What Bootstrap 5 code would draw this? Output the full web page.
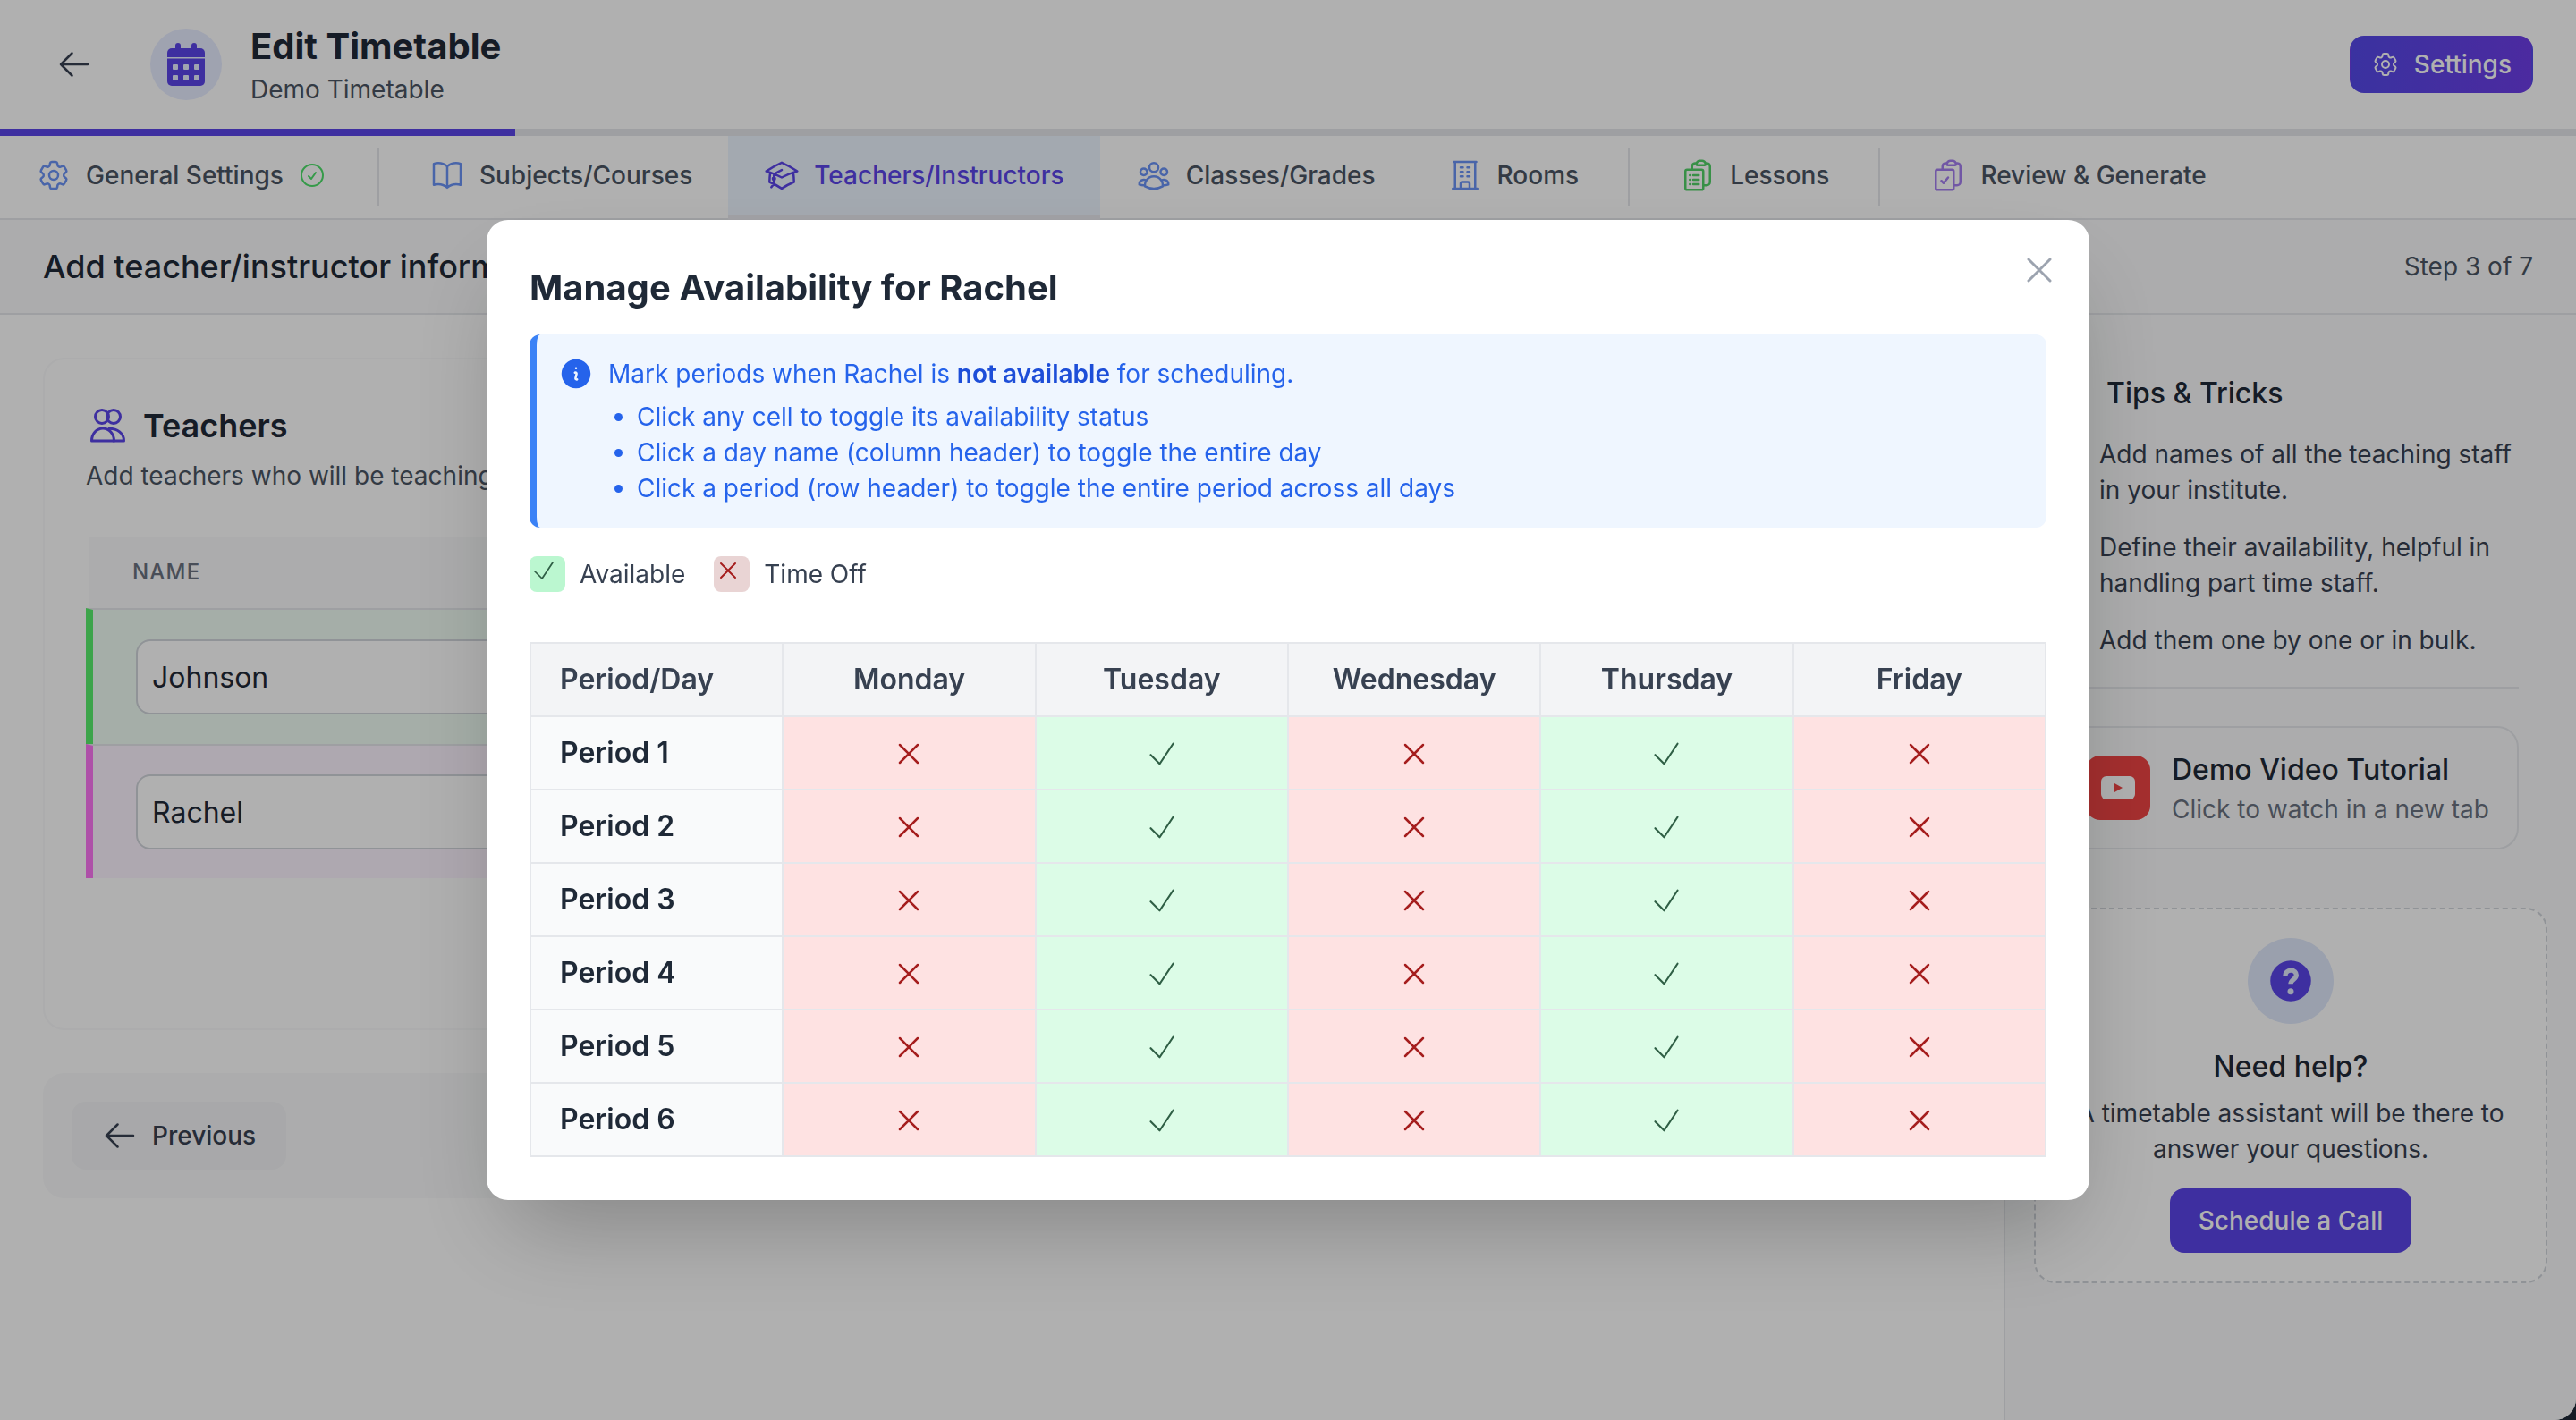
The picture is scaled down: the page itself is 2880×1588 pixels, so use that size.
<!DOCTYPE html>
<html lang="en">
<head>
<meta charset="utf-8">
<title>Edit Timetable</title>
<link rel="stylesheet" href="https://cdn.jsdelivr.net/npm/bootstrap@5.3.0/dist/css/bootstrap.min.css">
<style>
:root{--bs-border-width:2px;--brand:#5b45e8;}
html{font-size:32px;background:#1f2937;}
body{font-family:Inter,"Liberation Sans",sans-serif;font-size:28px;line-height:40px;color:#374151;background:#1f2937;}
.app-page{background:#fff;border-bottom-right-radius:24px;overflow:hidden;}
.ico{fill:none;stroke:currentColor;stroke-width:1.5;stroke-linecap:round;stroke-linejoin:round;flex:none;display:block;}
.ico-40{width:40px;height:40px;}
.ico-32{width:32px;height:32px;}
.top-bar{height:144px;padding:0 48px 0 63px;background:#fff;}
.back-link{color:#374151;margin-right:65px;}
.cal-disc{width:80px;height:80px;background:#e6ecff;color:var(--brand);margin-right:32px;}
.cal-disc svg{width:42px;height:48px;display:block;}
.cal-hole{fill:#e6ecff;}
.page-title{font-size:40px;line-height:56px;font-weight:700;color:#1f2937;margin:0;}
.page-sub{font-size:28px;line-height:40px;color:#4b5563;}
.btn-settings{--bs-btn-bg:#5b45e8;--bs-btn-border-color:transparent;--bs-btn-color:#fff;--bs-btn-border-radius:16px;--bs-btn-padding-x:22px;--bs-btn-padding-y:10px;--bs-btn-font-size:28px;--bs-btn-line-height:40px;--bs-btn-font-weight:500;background-image:linear-gradient(90deg,#5549e8,#6e3ee8);height:64px;}
.step-track{--bs-progress-height:8px;--bs-progress-bg:#e5e7eb;--bs-progress-bar-bg:var(--brand);--bs-progress-border-radius:0;}
.step-tabs{height:94px;background:#fff;border-bottom:2px solid #e5e7eb;flex-wrap:nowrap;}
.step-tabs .nav-link{--bs-nav-link-color:#4b5563;--bs-nav-link-hover-color:#4b5563;--bs-nav-link-padding-x:40px;--bs-nav-link-padding-y:0;--bs-nav-link-font-size:28px;--bs-nav-link-font-weight:500;height:88px;display:flex;align-items:center;gap:16px;}
.step-tabs .nav-link.active{color:var(--brand);background:#edf5ff;border-bottom:6px solid #e9e9ef;height:94px;}
.tab-rule{width:2px;height:64px;background:#e5e7eb;margin:14px 16px 0 17px;flex:none;}
.tab-rule.tight{margin-left:15px;}
.tone-blue{color:#6b93f5;}
.tone-brand{color:var(--brand);}
.tone-green{color:#52d168;}
.tone-purple{color:#a47ef0;}
.tone-ok{color:#4ee06a;}
.sub-head{height:106px;padding:0 48px;background:#f9fafb;border-bottom:2px solid #e5e7eb;}
.sub-title{font-size:36px;line-height:56px;font-weight:500;color:#1f2937;}
.sub-step{font-size:28px;color:#4b5563;}
.work-area{flex:1 1 auto;min-height:0;}
.work-main{flex:1 1 auto;min-width:0;padding:48px 48px 0;background:#fff;}
.staff-card{height:752px;border:2px solid #f9fafb;border-radius:24px;padding:46px;background:#fff;}
.staff-title{font-size:36px;line-height:56px;font-weight:600;color:#1f2937;margin:0;}
.staff-icon{width:48px;height:48px;color:var(--brand);stroke-width:3;}
.staff-sub{color:#4b5563;margin-top:8px;margin-bottom:48px;}
.staff-head{margin-left:4px;height:80px;padding-left:48px;background:#f9fafb;font-size:24px;font-weight:500;letter-spacing:1.2px;color:#6b7280;display:flex;align-items:center;}
.staff-row{border-left:8px solid;border-top:2px solid #e5e7eb;padding:32px 0 32px 48px;}
.staff-row.first{padding-top:33px;padding-bottom:33px;}
.row-green{border-left-color:#58ee6c;background:#f0fdf4;}
.row-pink{border-left-color:#fc74f4;background:#fdf4ff;}
.staff-input{width:1500px;height:84px;font-size:32px;line-height:48px;color:#1f2937;border:2px solid #d1d5db;border-radius:16px;padding:0 16px;}
.pager{margin-top:48px;height:140px;background:#f9fafb;border-radius:24px;padding:32px;}
.btn-prev{--bs-btn-bg:#f3f4f6;--bs-btn-border-color:#f3f4f6;--bs-btn-color:#374151;--bs-btn-border-radius:16px;--bs-btn-padding-x:32px;--bs-btn-padding-y:0;--bs-btn-font-size:28px;--bs-btn-line-height:40px;--bs-btn-font-weight:500;height:76px;}
.side-col{flex:0 0 640px;width:640px;background:#f9fafb;border-left:2px solid #e5e7eb;padding:32px;}
.tips-wrap{padding:32px 32px 0;}
.tips-title{font-size:32px;line-height:48px;font-weight:500;color:#1f2937;margin:0 0 24px 49px;}
.tips-text{margin:0 0 24px 41px;color:#374151;}
.tips-rule{border-top:2px solid #e5e7eb;margin:32px 0 42px;opacity:1;}
.video-card{border:2px solid #e5e7eb;border-radius:24px;padding:23px 24px;background:#fff0;gap:24px;}
.video-icon{width:72px;height:72px;background:#ef4444;border-radius:16px;flex:none;}
.video-icon svg{width:38px;height:26px;display:block;}
.video-name{font-size:32px;line-height:48px;font-weight:500;color:#1f2937;}
.video-hint{color:#6b7280;}
.help-box{margin-top:65px;border:2px dashed #d1d5db;border-radius:24px;background:#fff;padding:32px;text-align:center;}
.help-disc{width:96px;height:96px;background:#dfe8fb;color:var(--brand);margin:0 auto 24px;}
.help-disc svg{width:56px;height:56px;display:block;}
.help-title{font-size:32px;line-height:48px;font-weight:500;color:#1f2937;margin:0 0 8px;}
.help-text{margin:0 0 24px;color:#374151;white-space:nowrap;}
.btn-call{--bs-btn-bg:var(--brand);--bs-btn-border-color:var(--brand);--bs-btn-color:#fff;--bs-btn-border-radius:16px;--bs-btn-padding-x:30px;--bs-btn-padding-y:14px;--bs-btn-font-size:28px;--bs-btn-line-height:40px;--bs-btn-font-weight:500;}
.modal-backdrop{--bs-backdrop-opacity:.31;--bs-backdrop-bg:#000;}
.modal{--bs-modal-width:1792px;--bs-modal-border-width:0;--bs-modal-border-radius:24px;--bs-modal-padding:48px;}
.modal-content{box-shadow:0 50px 100px -24px rgba(0,0,0,.25);}
.dismiss-x{top:32px;right:32px;width:48px;height:48px;color:#9ca3af;border:0;--bs-btn-padding-x:0;--bs-btn-padding-y:0;}
.dismiss-x svg{width:48px;height:48px;}
.avail-title{font-size:40px;line-height:56px;font-weight:700;color:#1f2937;margin:0 0 24px;}
.info-note{--bs-alert-bg:#eff6ff;--bs-alert-color:#2563eb;--bs-alert-border-color:transparent;--bs-alert-padding-x:24px;--bs-alert-padding-y:24px;--bs-alert-margin-bottom:32px;--bs-alert-border-radius:12px;border:0;border-left:8px solid #3b82f6;}
.info-note svg{width:40px;height:40px;color:#2563eb;flex:none;}
.info-note ul{padding-left:32px;margin:8px 0 0;}
.info-note strong{font-weight:600;color:#1d4ed8;}
.key-row{margin-bottom:56px;gap:32px;height:40px;color:#374151;}
.key-chip{width:40px;height:40px;border-radius:8px;display:block;}
.key-chip svg{width:32px;height:32px;display:block;stroke-width:1.5;}
.chip-on{background:#bbf7d0;color:#2f5f45;}
.chip-on svg{stroke-width:1.3;}
.chip-off{background:#e9d4d4;color:#a51d1d;}
.avail-grid{--bs-table-border-color:#e5e7eb;--bs-table-bg:transparent;table-layout:fixed;border-color:#e5e7eb;}
.avail-grid>*>tr>*{height:82px;padding:0;vertical-align:middle;text-align:center;font-size:32px;line-height:48px;font-weight:600;}
.avail-grid>thead>tr>*{--bs-table-bg:#f3f4f6;color:#374151;}
.avail-grid>tbody>tr>th{--bs-table-bg:#f9fafb;color:#1f2937;}
.avail-grid>*>tr>.lead-col{text-align:left;padding-left:32px;}
.avail-grid>tbody>tr>.is-off{--bs-table-bg:#fee2e2;color:#a51d1d;}
.avail-grid>tbody>tr>.is-on{--bs-table-bg:#dcfce7;color:#2f5f45;}
.avail-grid>tbody>tr>.is-on svg{stroke-width:1.3;}
.avail-grid svg{width:40px;height:40px;margin:2px auto 0;}
</style>
</head>
<body class="overflow-hidden">
<div class="app-page d-flex flex-column vh-100">
  <header class="top-bar d-flex align-items-center justify-content-between">
    <div class="d-flex align-items-center">
      <a class="back-link" href="#" aria-label="Back"><svg class="ico ico-40" viewBox="0 0 24 24"><path d="M10.5 19.5L3 12m0 0l7.5-7.5M3 12h18"/></svg></a>
      <div class="cal-disc rounded-circle d-flex align-items-center justify-content-center">
        <svg viewBox="0 0 42 48" fill="currentColor"><rect x="9" width="6" height="12" rx="3"/><rect x="27" width="6" height="12" rx="3"/><path d="M5 6h32a5 5 0 0 1 5 5v5H0v-5a5 5 0 0 1 5-5z"/><path d="M0 17.500h42V43a5 5 0 0 1-5 5H5a5 5 0 0 1-5-5z"/><g class="cal-hole"><rect x="6" y="24" width="6" height="6" rx="1"/><rect x="18" y="24" width="6" height="6" rx="1"/><rect x="30" y="24" width="6" height="6" rx="1"/><rect x="6" y="36" width="6" height="6" rx="1"/><rect x="18" y="36" width="6" height="6" rx="1"/><rect x="30" y="36" width="6" height="6" rx="1"/></g></svg>
      </div>
      <div>
        <h1 class="page-title">Edit Timetable</h1>
        <div class="page-sub">Demo Timetable</div>
      </div>
    </div>
    <button class="btn btn-settings d-flex align-items-center gap-2" type="button">
      <svg class="ico ico-32" viewBox="0 0 24 24"><path d="M9.594 3.94c.09-.542.56-.94 1.11-.94h2.593c.55 0 1.02.398 1.11.94l.213 1.281c.063.374.313.686.645.87.074.04.147.083.22.127.324.196.72.257 1.075.124l1.217-.456a1.125 1.125 0 011.37.49l1.296 2.247a1.125 1.125 0 01-.26 1.431l-1.003.827c-.293.24-.438.613-.431.992a6.759 6.759 0 010 .255c-.007.378.138.75.43.99l1.005.828c.424.35.534.954.26 1.43l-1.298 2.247a1.125 1.125 0 01-1.369.491l-1.217-.456c-.355-.133-.75-.072-1.076.124a6.57 6.57 0 01-.22.128c-.331.183-.581.495-.644.869l-.213 1.28c-.09.543-.56.941-1.11.941h-2.594c-.55 0-1.02-.398-1.11-.94l-.213-1.281c-.062-.374-.312-.686-.644-.87a6.52 6.52 0 01-.22-.127c-.325-.196-.72-.257-1.076-.124l-1.217.456a1.125 1.125 0 01-1.369-.49l-1.297-2.247a1.125 1.125 0 01.26-1.431l1.004-.827c.292-.24.437-.613.43-.992a6.932 6.932 0 010-.255c.007-.378-.138-.75-.43-.99l-1.004-.828a1.125 1.125 0 01-.26-1.43l1.297-2.247a1.125 1.125 0 011.37-.491l1.216.456c.356.133.751.072 1.076-.124.072-.044.146-.087.22-.128.332-.183.582-.495.644-.869l.214-1.281z"/><path d="M15 12a3 3 0 11-6 0 3 3 0 016 0z"/></svg>
      Settings
    </button>
  </header>
  <div class="progress step-track flex-none"><div class="progress-bar" style="width:20%"></div></div>
  <nav class="nav step-tabs">
    <a class="nav-link" href="#"><svg class="ico ico-40 tone-blue" viewBox="0 0 24 24"><path d="M9.594 3.94c.09-.542.56-.94 1.11-.94h2.593c.55 0 1.02.398 1.11.94l.213 1.281c.063.374.313.686.645.87.074.04.147.083.22.127.324.196.72.257 1.075.124l1.217-.456a1.125 1.125 0 011.37.49l1.296 2.247a1.125 1.125 0 01-.26 1.431l-1.003.827c-.293.24-.438.613-.431.992a6.759 6.759 0 010 .255c-.007.378.138.75.43.99l1.005.828c.424.35.534.954.26 1.43l-1.298 2.247a1.125 1.125 0 01-1.369.491l-1.217-.456c-.355-.133-.75-.072-1.076.124a6.57 6.57 0 01-.22.128c-.331.183-.581.495-.644.869l-.213 1.28c-.09.543-.56.941-1.11.941h-2.594c-.55 0-1.02-.398-1.11-.94l-.213-1.281c-.062-.374-.312-.686-.644-.87a6.52 6.52 0 01-.22-.127c-.325-.196-.72-.257-1.076-.124l-1.217.456a1.125 1.125 0 01-1.369-.49l-1.297-2.247a1.125 1.125 0 01.26-1.431l1.004-.827c.292-.24.437-.613.43-.992a6.932 6.932 0 010-.255c.007-.378-.138-.75-.43-.99l-1.004-.828a1.125 1.125 0 01-.26-1.43l1.297-2.247a1.125 1.125 0 011.37-.491l1.216.456c.356.133.751.072 1.076-.124.072-.044.146-.087.22-.128.332-.183.582-.495.644-.869l.214-1.281z"/><path d="M15 12a3 3 0 11-6 0 3 3 0 016 0z"/></svg>General Settings<svg class="ico ico-32 tone-ok" viewBox="0 0 24 24"><path d="M9 12.75L11.25 15 15 9.75M21 12a9 9 0 11-18 0 9 9 0 0118 0z"/></svg></a>
    <span class="tab-rule"></span>
    <a class="nav-link" href="#"><svg class="ico ico-40 tone-blue" viewBox="0 0 24 24"><path d="M12 6.042A8.967 8.967 0 006 3.75c-1.052 0-2.062.18-3 .512v14.25A8.987 8.987 0 016 18c2.305 0 4.408.867 6 2.292m0-14.25a8.966 8.966 0 016-2.292c1.052 0 2.062.18 3 .512v14.25A8.987 8.987 0 0018 18a8.967 8.967 0 00-6 2.292m0-14.25v14.25"/></svg>Subjects/Courses</a>
    <a class="nav-link active" href="#"><svg class="ico ico-40 tone-brand" viewBox="0 0 24 24"><path d="M4.26 10.147a60.436 60.436 0 00-.491 6.347A48.627 48.627 0 0112 20.904a48.627 48.627 0 018.232-4.41 60.46 60.46 0 00-.491-6.347m-15.482 0a50.57 50.57 0 00-2.658-.813A59.905 59.905 0 0112 3.493a59.902 59.902 0 0110.399 5.84c-.896.248-1.783.52-2.658.814m-15.482 0A50.697 50.697 0 0112 13.489a50.702 50.702 0 017.74-3.342M6.75 15a.75.75 0 100-1.5.75.75 0 000 1.5zm0 0v-3.675A55.378 55.378 0 0112 8.443m-7.007 11.55A5.981 5.981 0 006.75 15.75v-1.5"/></svg>Teachers/Instructors</a>
    <a class="nav-link" href="#"><svg class="ico ico-40 tone-blue" viewBox="0 0 24 24"><path d="M18 18.72a9.094 9.094 0 003.741-.479 3 3 0 00-4.682-2.72m.94 3.198l.001.031c0 .225-.012.447-.037.666A11.944 11.944 0 0112 21c-2.17 0-4.207-.576-5.963-1.584A6.062 6.062 0 016 18.719m12 0a5.971 5.971 0 00-.941-3.197m0 0A5.995 5.995 0 0012 12.75a5.995 5.995 0 00-5.058 2.772m0 0a3 3 0 00-4.681 2.72 8.986 8.986 0 003.74.477m.94-3.197a5.971 5.971 0 00-.94 3.197M15 6.75a3 3 0 11-6 0 3 3 0 016 0zm6 3a2.25 2.25 0 11-4.5 0 2.25 2.25 0 014.5 0zm-13.5 0a2.25 2.25 0 11-4.5 0 2.25 2.25 0 014.5 0z"/></svg>Classes/Grades</a>
    <a class="nav-link" href="#"><svg class="ico ico-40 tone-blue" viewBox="0 0 24 24"><path d="M3.75 21h16.5M4.5 3h15M5.25 3v18m13.5-18v18M9 6.75h1.5m-1.5 3h1.5m-1.5 3h1.5m3-6H15m-1.5 3H15m-1.5 3H15M9 21v-3.375c0-.621.504-1.125 1.125-1.125h3.75c.621 0 1.125.504 1.125 1.125V21"/></svg>Rooms</a>
    <span class="tab-rule tight"></span>
    <a class="nav-link" href="#"><svg class="ico ico-40 tone-green" viewBox="0 0 24 24"><path d="M9 12h3.75M9 15h3.75M9 18h3.75m3 .75H18a2.25 2.25 0 002.25-2.25V6.108c0-1.135-.845-2.098-1.976-2.192a48.424 48.424 0 00-1.123-.08m-5.801 0c-.065.21-.1.433-.1.664 0 .414.336.75.75.75h4.5a.75.75 0 00.75-.75 2.25 2.25 0 00-.1-.664m-5.8 0A2.251 2.251 0 0113.5 2.25H15c1.012 0 1.867.668 2.15 1.586m-5.8 0c-.376.023-.75.05-1.124.08C9.095 4.01 8.25 4.973 8.25 6.108V8.25m0 0H4.875c-.621 0-1.125.504-1.125 1.125v11.25c0 .621.504 1.125 1.125 1.125h9.75c.621 0 1.125-.504 1.125-1.125V9.375c0-.621-.504-1.125-1.125-1.125H8.25zM6.75 12h.008v.008H6.75V12zm0 3h.008v.008H6.75V15zm0 3h.008v.008H6.75V18z"/></svg>Lessons</a>
    <span class="tab-rule tight"></span>
    <a class="nav-link" href="#"><svg class="ico ico-40 tone-purple" viewBox="0 0 24 24"><path d="M11.35 3.836c-.065.21-.1.433-.1.664 0 .414.336.75.75.75h4.5a.75.75 0 00.75-.75 2.25 2.25 0 00-.1-.664m-5.8 0A2.251 2.251 0 0113.5 2.25H15c1.012 0 1.867.668 2.15 1.586m-5.8 0c-.376.023-.75.05-1.124.08C9.095 4.01 8.25 4.973 8.25 6.108V8.25m8.9-4.414c.376.023.75.05 1.124.08 1.131.094 1.976 1.057 1.976 2.192V16.5A2.25 2.25 0 0118 18.75h-2.25m-7.5-10.5H4.875c-.621 0-1.125.504-1.125 1.125v11.25c0 .621.504 1.125 1.125 1.125h9.75c.621 0 1.125-.504 1.125-1.125V18.75m-7.5-10.5h6.375c.621 0 1.125.504 1.125 1.125v9.375m-8.25-3l1.5 1.5 3-3.750"/></svg>Review &amp; Generate</a>
  </nav>
  <div class="sub-head d-flex align-items-center justify-content-between">
    <div class="sub-title">Add teacher/instructor information</div>
    <div class="sub-step">Step 3 of 7</div>
  </div>
  <div class="work-area d-flex">
    <main class="work-main">
      <section class="staff-card">
        <div class="d-flex align-items-center gap-2">
          <svg class="ico staff-icon" viewBox="0 0 48 48"><circle cx="18" cy="14" r="7.500"/><circle cx="31" cy="14" r="7.500"/><path d="M6.500 41a12.500 14 0 0 1 25 0z"/><path d="M26 27.300c9 0 16.500 5 16.500 13.700H31"/></svg>
          <h2 class="staff-title">Teachers</h2>
        </div>
        <div class="staff-sub">Add teachers who will be teaching at your institute.</div>
        <div class="staff-head">NAME</div>
        <div class="staff-row first row-green"><input class="form-control staff-input" type="text" value="Johnson" readonly></div>
        <div class="staff-row row-pink"><input class="form-control staff-input" type="text" value="Rachel" readonly></div>
      </section>
      <div class="pager d-flex align-items-center">
        <button class="btn btn-prev d-flex align-items-center gap-2" type="button"><svg class="ico ico-40" viewBox="0 0 24 24"><path d="M10.5 19.5L3 12m0 0l7.5-7.5M3 12h18"/></svg>Previous</button>
      </div>
    </main>
    <aside class="side-col">
      <div class="tips-wrap">
        <h3 class="tips-title">Tips &amp; Tricks</h3>
        <p class="tips-text">Add names of all the teaching staff in your institute.</p>
        <p class="tips-text">Define their availability, helpful in handling part time staff.</p>
        <p class="tips-text mb-0">Add them one by one or in bulk.</p>
        <hr class="tips-rule">
        <a class="video-card d-flex align-items-center text-decoration-none" href="#">
          <span class="video-icon d-flex align-items-center justify-content-center">
            <svg viewBox="0 0 38 26"><rect width="38" height="26" rx="6" fill="#fff"/><path d="M15 8v10l9-5z" fill="#ef4444"/></svg>
          </span>
          <span class="d-block">
            <span class="video-name d-block">Demo Video Tutorial</span>
            <span class="video-hint d-block">Click to watch in a new tab</span>
          </span>
        </a>
      </div>
      <div class="help-box">
        <div class="help-disc rounded-circle d-flex align-items-center justify-content-center">
          <svg viewBox="0 0 24 24"><circle cx="12" cy="12" r="9.75" fill="currentColor"/><path d="M9.400 9.600c0-1.600 1.100-2.700 2.700-2.700s2.600 1 2.600 2.300c0 2-2.700 2.200-2.700 4.200" fill="none" stroke="#dfe8fb" stroke-width="2.300"/><circle cx="12" cy="17" r="1.500" fill="#dfe8fb"/></svg>
        </div>
        <h3 class="help-title">Need help?</h3>
        <p class="help-text">A timetable assistant will be there to<br>answer your questions.</p>
        <button class="btn btn-call" type="button">Schedule a Call</button>
      </div>
    </aside>
  </div>
</div>

<div class="modal-backdrop show"></div>
<div class="modal d-block" tabindex="-1" role="dialog" aria-modal="true">
  <div class="modal-dialog modal-dialog-centered">
    <div class="modal-content">
      <button class="btn dismiss-x position-absolute" type="button" aria-label="Close"><svg class="ico" viewBox="0 0 24 24"><path d="M6 18L18 6M6 6l12 12"/></svg></button>
      <div class="modal-body">
        <h2 class="avail-title">Manage Availability for Rachel</h2>
        <div class="alert info-note d-flex gap-2" role="alert">
          <svg viewBox="0 0 24 24" fill="currentColor"><path fill-rule="evenodd" d="M2.25 12c0-5.385 4.365-9.75 9.75-9.75s9.75 4.365 9.75 9.75-4.365 9.75-9.75 9.75S2.25 17.385 2.25 12zm8.706-1.442c1.146-.573 2.437.463 2.126 1.706l-.709 2.836.042-.02a.75.75 0 01.67 1.34l-.04.022c-1.147.573-2.438-.463-2.127-1.706l.71-2.836-.042.02a.75.75 0 11-.671-1.34l.041-.022zM12 9a.75.75 0 100-1.5.75.75 0 000 1.5z"/></svg>
          <div>
            <div>Mark periods when Rachel is <strong>not available</strong> for scheduling.</div>
            <ul>
              <li>Click any cell to toggle its availability status</li>
              <li>Click a day name (column header) to toggle the entire day</li>
              <li>Click a period (row header) to toggle the entire period across all days</li>
            </ul>
          </div>
        </div>
        <div class="key-row d-flex align-items-center">
          <div class="d-flex align-items-center gap-2"><span class="key-chip chip-on"><svg class="ico" viewBox="0 0 24 24"><path d="M4.5 12.75l6 6 9-13.5"/></svg></span>Available</div>
          <div class="d-flex align-items-center gap-2"><span class="key-chip chip-off"><svg class="ico" viewBox="0 0 24 24"><path d="M6 18L18 6M6 6l12 12"/></svg></span>Time Off</div>
        </div>
        <table class="table table-bordered avail-grid mb-0">
          <thead>
            <tr><th class="lead-col">Period/Day</th><th>Monday</th><th>Tuesday</th><th>Wednesday</th><th>Thursday</th><th>Friday</th></tr>
          </thead>
          <tbody id="gridBody"></tbody>
        </table>
      </div>
    </div>
  </div>
</div>
<script>
var yes='<svg class="ico" viewBox="0 0 24 24"><path d="M4.500 12.750l6 6 9-13.500"/></svg>';
var no='<svg class="ico" viewBox="0 0 24 24"><path d="M6 18L18 6M6 6l12 12"/></svg>';
var html='';
for(var p=1;p<=6;p++){
  html+='<tr><th class="lead-col">Period '+p+'</th>';
  [0,1,0,1,0].forEach(function(v){html+=v?'<td class="is-on">'+yes+'</td>':'<td class="is-off">'+no+'</td>';});
  html+='</tr>';
}
document.getElementById('gridBody').innerHTML=html;
</script>
<script src="https://cdn.jsdelivr.net/npm/bootstrap@5.3.0/dist/js/bootstrap.bundle.min.js"></script>
</body>
</html>
